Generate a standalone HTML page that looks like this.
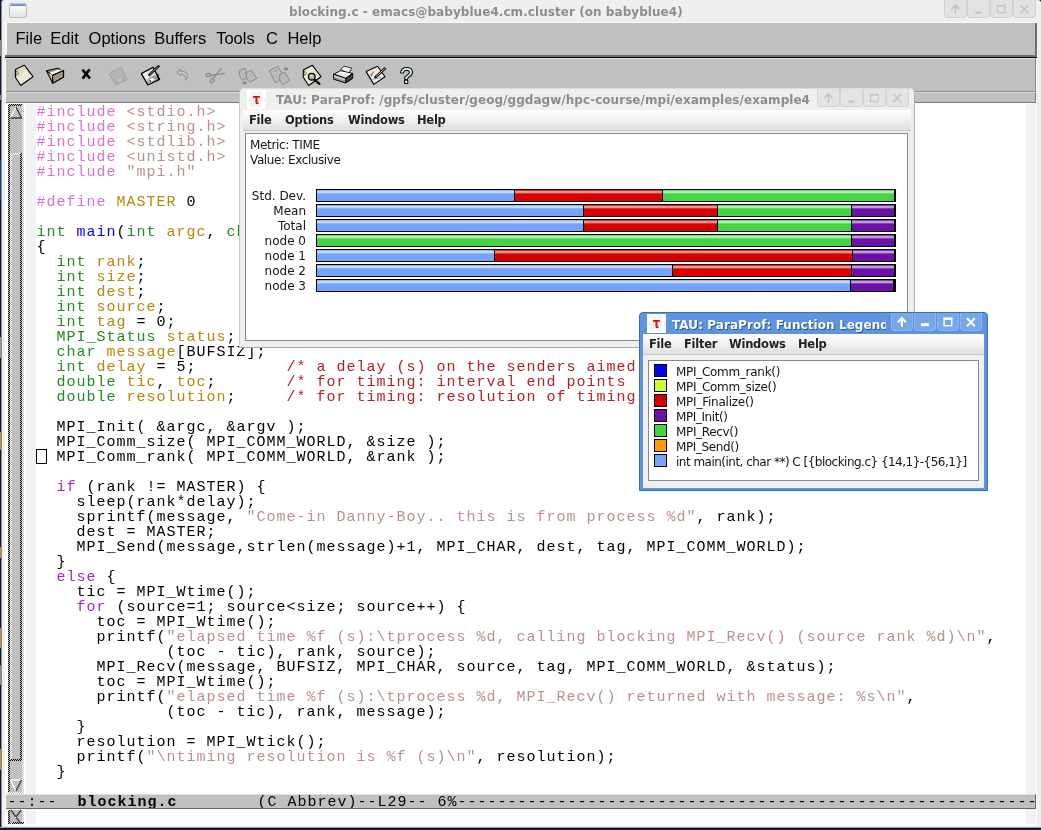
<!DOCTYPE html>
<html><head><meta charset="utf-8"><title>blocking.c - emacs</title>
<style>
*{box-sizing:border-box;margin:0;padding:0}
html,body{width:1041px;height:830px;overflow:hidden;background:#0d1830}
body{position:relative;font-family:"Liberation Sans",sans-serif}
.abs{position:absolute}
#root{position:absolute;left:0;top:0;width:1041px;height:830px;will-change:transform;transform:translateZ(0)}
#desk{left:0;top:0;width:1041px;height:830px;background:#101c38}
#dbot{left:0;top:827px;width:1041px;height:3px;background:linear-gradient(#9a9da6 0 1px,#0e1a34 1px 3px)}
#dleft{left:0;top:0;width:1px;height:830px;background:linear-gradient(#0b1428 0px 40px,#8a8a8a 40px 56px,#0d1a36 56px 95px,#8a8a8a 95px 100px,#0d1a36 100px 160px,#1c3f7a 160px 200px,#0d1a36 200px 337px,#9a9a98 337px 358px,#0d1a36 358px 432px,#d08a20 432px 450px,#0d1a36 450px 547px,#d08a20 547px 558px,#0d1a36 558px 628px,#d08a20 628px 648px,#0d1a36 648px 665px,#8a8a8a 665px 685px,#0d1a36 685px 749px,#d08a20 749px 770px,#0d1a36 770px 830px)}
#ewin{left:1px;top:0;width:1040px;height:827px;background:#efefee;border-left:1px solid #848a96;border-radius:3px 3px 0 0}
#xwin{left:5px;top:22px;width:1032px;height:804px;background:#fbfbfb}
#etitle{left:0;top:0;width:1041px;height:22px;font:bold 12px "DejaVu Sans",sans-serif;color:#8c8c8a}
#etitle span{position:absolute;left:289px;top:4.5px;white-space:pre;letter-spacing:.06px}
.wb{position:absolute;top:0;height:18px;width:23px;border:1px solid #d2d2d0;border-top:none;border-radius:0 0 4px 4px;background:#e2e2e0}
#emenu{left:7px;top:23px;width:1030px;height:35px;background:#c0c0c0;border-bottom:1px solid #000;border-right:2px solid #707070}
#emenu:after{content:"";position:absolute;left:0;right:0;bottom:0;height:2px;background:#707070}
#mline{left:5px;top:55px;width:1032px;height:3px;background:#000;border-top:2px solid #707070}
#emenu span{position:absolute;top:4.5px;font-size:16.5px;line-height:20px;color:#000;white-space:pre}
#etool{left:6px;top:58px;width:1030px;height:34px;background:#c0c0c0;border-top:1px solid #dcdcdc;border-bottom:1px solid #8a8a8a;border-right:1px solid #8a8a8a}
#egap{left:6px;top:92px;width:1030px;height:11px;background:#c0c0c0;border-top:1px solid #dadada;border-bottom:1px solid #7a7a7a;border-right:1px solid #7a7a7a}
#etext{left:5px;top:103px;width:1032px;height:723px;background:#fff}
.fringe{position:absolute;top:1px;width:10px;background:#f2f2f2}
pre.code{position:absolute;left:31.5px;top:2px;font:15px/15px "Liberation Mono",monospace;letter-spacing:.998px;color:#000;white-space:pre}
.b{color:#da70d6}.s{color:#bc8f8f}.v{color:#b8860b}.t{color:#228b22}.f{color:#0000ff}.k{color:#a020f0}.c{color:#b22222}
#cursor{position:absolute;left:31px;top:346px;width:11px;height:15px;border:1px solid #000}
#mode{left:6px;top:794px;width:1030px;height:15px;background:#c0c0c0;border-top:1px solid #dedede;border-bottom:1px solid #666;border-right:1px solid #666;overflow:hidden}
#mode pre{position:absolute;left:1.5px;top:-.5px;font:15px/15px "Liberation Mono",monospace;letter-spacing:.998px;color:#000;white-space:pre}

#pwin{left:239px;top:88px;width:676px;height:260px;background:#efefee;border:1px solid #c9c9c7;border-top-color:#dcdcda;border-bottom-color:#a8a8a6;border-right-color:#b0b0ae;border-radius:5px 5px 0 0}
.jt{position:absolute;font:bold 12px "DejaVu Sans",sans-serif;white-space:pre}
#pwin .ttl{left:36px;top:4px;color:#8c8c8a;line-height:15px;letter-spacing:.045px}
.jmenu{position:absolute;background:linear-gradient(#ffffff,#f4f4f4 40%,#dedede);border-bottom:1px solid #c8c8c8}
.jmenu span{position:absolute;top:3px;font:bold 11.5px/15px "DejaVu Sans",sans-serif;color:#222;letter-spacing:-0.25px}
.jpanel{position:absolute;background:#fff;border:1px solid #7a8a99}
.jl{position:absolute;font:12px/15px "DejaVu Sans",sans-serif;color:#141414;white-space:pre}
.bar{position:absolute;width:580px;height:13px;background:#000}
.seg{position:absolute;top:1px;height:11px}
.seg:after{content:"";position:absolute;left:0;right:0;top:0;height:4px;background:linear-gradient(rgba(255,255,255,.18) 0 1px,rgba(255,255,255,.58) 1px 3px,rgba(255,255,255,.2) 3px 4px)}
.cb{background:#74a3fb}.cr{background:#d80000}.cg{background:#44d544}.cp{background:#6a12a8}
.pwb{position:absolute;top:0;height:18px;width:23px;border:1px solid #d4d4d2;border-top:none;border-radius:0 0 4px 4px;background:#e4e4e2}

#lwin{left:639px;top:312px;width:349px;height:179px;background:#5e93df;border:1px solid #3c6db8;border-radius:4px 4px 0 0}
#lwin .ttl{left:32px;top:4.5px;color:#fff;line-height:15px;text-shadow:1px 1px 0 #2d5595;width:214px;overflow:hidden;letter-spacing:.07px}
#linner{left:3px;top:21px;width:341px;height:154px;background:#efefee}
.lb{position:absolute;top:0;height:18px;width:22px;border:1px solid #8db6ee;border-top:none;border-radius:0 0 4px 4px;background:#78a7e8}
.sw{position:absolute;left:5px;width:13px;height:13px;border:1px solid #000}

svg{position:absolute;overflow:visible}
.dith{background:repeating-conic-gradient(#000 0 25%,#c0c0c0 0 50%) 0 0/2px 2px}
.dithw{background:repeating-conic-gradient(#fff 0 25%,#c0c0c0 0 50%) 0 0/2px 2px}
</style></head><body>
<div id="root">
<div id="desk" class="abs"></div><div id="dleft" class="abs"></div>
<div id="ewin" class="abs"></div>
<div id="xwin" class="abs"></div>
<div id="dbot" class="abs"></div><div id="etitle" class="abs"><span>blocking.c - emacs@babyblue4.cm.cluster (on babyblue4)</span><svg width="18" height="15" viewBox="0 0 18 15" style="left:9px;top:3px"><defs><linearGradient id="wi" x1="0" y1="0" x2="0" y2="1"><stop offset="0" stop-color="#fff"/><stop offset="1" stop-color="#e2e4e0"/></linearGradient></defs><rect x=".5" y=".5" width="17" height="14" rx="1.5" fill="url(#wi)" stroke="#bdbdbb"/><rect x="1.5" y="1.3" width="15" height="1.6" fill="#4e7dc0"/></svg><div class="wb" style="left:944px"><svg width="23" height="18" viewBox="0 0 23 18" style="left:-1px;top:0"><path d="M11.4 13.8 V5.8 M7.5 9.3 L11.4 5.1 L15.3 9.3" fill="none" stroke="#c4c4c2" stroke-width="1.6800000000000002"/></svg></div><div class="wb" style="left:967px"><svg width="23" height="18" viewBox="0 0 23 18" style="left:-1px;top:0"><rect x="8.4" y="11.4" width="6.2" height="2.3" fill="#c4c4c2"/></svg></div><div class="wb" style="left:990px"><svg width="23" height="18" viewBox="0 0 23 18" style="left:-1px;top:0"><rect x="7.6000000000000005" y="5.5" width="7.6" height="7.2" fill="none" stroke="#c4c4c2" stroke-width="1.1199999999999999"/><path d="M6.9 5.7 H15.9" stroke="#c4c4c2" stroke-width="1.7600000000000002"/></svg></div><div class="wb" style="left:1013px"><svg width="23" height="18" viewBox="0 0 23 18" style="left:-1px;top:0"><path d="M7.5 5.2 L15.3 13.2 M15.3 5.2 L7.5 13.2" stroke="#c4c4c2" stroke-width="1.6"/></svg></div></div>
<div id="emenu" class="abs"><span style="left:8.5px">File</span><span style="left:43.3px">Edit</span><span style="left:81.6px">Options</span><span style="left:147.3px">Buffers</span><span style="left:209.2px">Tools</span><span style="left:259px">C</span><span style="left:280.4px">Help</span></div>
<div id="mline" class="abs"></div><div id="etool" class="abs"><svg width="1030" height="34" viewBox="6 59 1030 34" style="left:0;top:0"><polygon points="15.4,69.6 24.4,65.3 33,76.7 20.7,85.5 15.4,77.2" fill="#ebebd3" stroke="#000" stroke-width="1.1" stroke-linejoin="round"/><polygon points="16.2,70.2 24.2,66.2 26.4,69 17.6,78.6 16.2,76.8" fill="#dadabd"/><polygon points="16.2,70.6 18.8,73.2 16.2,75.2" fill="#f6f6e6" stroke="#000" stroke-width=".5"/><polygon points="46.4,70.8 57.8,68.2 60.4,69.5 52.4,75.3" fill="#a09078" stroke="#000" stroke-width="1"/><polygon points="46.4,70.8 52.4,75.3 52.6,83.2" fill="#a09078" stroke="#000" stroke-width="1" stroke-linejoin="round"/><polygon points="49.6,72.8 58.8,69.6 61,70.8 52.6,75" fill="#fff"/><polygon points="49.4,73.2 52.2,75.4 52.3,79.2" fill="#fff"/><polygon points="52.5,75.4 63.5,70.5 63.5,77.3 52.7,83.2" fill="#a29882" stroke="#000" stroke-width="1.3" stroke-linejoin="round"/><path d="M82.4 69.6 L90 78.4 M89.6 69.4 L82.6 78.6" stroke="#000" stroke-width="2.6" stroke-linecap="butt" fill="none"/><g stroke="#a2a2a2" stroke-width="1" stroke-linejoin="round"><polygon points="109.3,73.6 121.3,67.3 127.6,79.4 115.8,84.8" fill="#b4b4b4"/><polygon points="115.4,79.6 123.6,75.6 125.6,79.2 117.4,83.4" fill="#c2c2c2" stroke-width=".6"/></g><path d="M117.6 80.6 L118.4 82 M122.4 76.6 a1.2 1.6 -25 1 0 .1 0" fill="none" stroke="#9a9a9a" stroke-width=".8"/><polygon points="141.3,73.6 153,67.3 159.6,79.4 147.8,84.8" fill="#d4d4d4" stroke="#000" stroke-width="1.3" stroke-linejoin="round"/><polygon points="142.6,74 147,71.6 149.4,76 147.6,82" fill="#ececec"/><polygon points="147.6,79.8 155.6,75.8 157.4,79.2 149.2,83.4" fill="#f4f4f4" stroke="#555" stroke-width=".7"/><polygon points="156.6,74.6 158.2,73.8 159.6,79.4 158,80.2" fill="#000"/><path d="M149.8 80.2 L150.6 81.8" stroke="#000" stroke-width="1.2"/><ellipse cx="154.6" cy="77.6" rx="1.1" ry="1.5" transform="rotate(-25 154.6 77.6)" fill="#bbb" stroke="#666" stroke-width=".6"/><path d="M148.6 75.6 L159.2 65.6" stroke="#000" stroke-width="2.3"/><path d="M149.6 74.7 L158.6 66.2" stroke="#a8a8a8" stroke-width=".8"/><path d="M177 72.4 L180.5 69.3 L180.6 71.2 C184.6 70.8 187.8 73.4 187.7 76.6 C187.5 78.2 186.5 79.3 185.4 79.7 C186.3 77.4 185.2 74.4 180.6 74.2 L180.5 75.6 Z" fill="#c6c6c6" stroke="#868686" stroke-width="1" stroke-linejoin="round"/><g fill="none" stroke="#868686" stroke-width="1.1"><path d="M221.4 68.2 L212.8 79 M224.8 73.4 L210.4 75.4"/><ellipse cx="208.3" cy="74.9" rx="2.3" ry="1.6"/><ellipse cx="212.2" cy="80.8" rx="1.5" ry="2.6" transform="rotate(35 212.2 80.8)"/></g><g fill="#b9b9b9" stroke="#8a8a8a" stroke-width="1" stroke-linejoin="round"><polygon points="239.3,70.5 244.4,68.2 245.9,70.2 246.4,77.9 242.4,80.4 239.3,75"/><polygon points="246.4,72.7 251.3,70.2 256.8,78.4 249.3,82.4 246.4,77.9"/></g><path d="M242 83 H244.4 V81.5 L246.6 83 L244.4 84.5 V83" fill="#808080" stroke="#808080" stroke-width=".9" stroke-linejoin="round"/><g fill="#b9b9b9" stroke="#8a8a8a" stroke-width="1" stroke-linejoin="round"><polygon points="269.3,70.8 277.8,66.2 281.6,72.6 279.6,80.6 275.4,82.6"/><polygon points="279.8,74.4 284.6,72.2 289.8,80.4 282.4,84.6 279.6,79.4"/></g><path d="M274.2 71.2 L276.6 69.8 L275.8 71.6 Z" fill="none" stroke="#9a9a9a" stroke-width=".7"/><path d="M283.3 68.9 H285.7 V67.4 L287.9 68.9 L285.7 70.4 V68.9" fill="#808080" stroke="#808080" stroke-width=".9" stroke-linejoin="round"/><polygon points="303.3,70 312.4,65.3 321,76.7 308.7,85.5 303.3,77.2" fill="#ebebd3" stroke="#000" stroke-width="1.1" stroke-linejoin="round"/><polygon points="304.2,70.8 306.8,73.4 304.2,75.4" fill="#f6f6e6" stroke="#000" stroke-width=".5"/><circle cx="311.8" cy="76.7" r="3.3" fill="#b8bca6" stroke="#000" stroke-width="1.3"/><circle cx="310.8" cy="75.8" r="1.1" fill="#d8dccc"/><path d="M314.6 79.8 L319.4 83.8" stroke="#000" stroke-width="2.3" stroke-linecap="round"/><polygon points="340.6,69.6 344.1,66.1 351.9,68.2 348.7,73.4" fill="#f2f2f2" stroke="#000" stroke-width=".8" stroke-linejoin="round"/><polygon points="333.5,74.2 340.4,70.8 352.7,73.4 345.8,78.4" fill="#e6e6e6" stroke="#000" stroke-width=".9" stroke-linejoin="round"/><polygon points="339.4,72.8 342,71.4 350.4,73.4 347.6,75.2" fill="#fafafa"/><polygon points="333.5,74.2 345.8,78.4 345.8,83 333.7,79.2" fill="#9c9c9c" stroke="#000" stroke-width="1" stroke-linejoin="round"/><polygon points="334.2,75.2 345.4,79 345.4,80.4 334.2,76.8" fill="#d4d4d4"/><polygon points="345.8,78.4 352.7,73.4 352.7,78.4 345.8,83" fill="#404040" stroke="#000" stroke-width="1" stroke-linejoin="round"/><polygon points="366.1,71.6 377.6,66.2 385,76.7 373.8,84.4" fill="#ececec" stroke="#000" stroke-width="1.1" stroke-linejoin="round"/><path d="M370.4 73.4 L371.6 75.6 L373.6 71.6" stroke="#b86840" stroke-width="1.1" fill="none"/><path d="M372.4 79.4 L381 77.4" stroke="#999" stroke-width="1"/><path d="M374.8 77.8 L385.6 67.8" stroke="#000" stroke-width="2.5"/><path d="M375.8 76.9 L385.2 68.2" stroke="#e8b070" stroke-width="1"/><text x="406.6" y="82.7" text-anchor="middle" font-family="Liberation Sans, sans-serif" font-size="22.5" fill="#e4f6e4" stroke="#000" stroke-width="2.2" stroke-linejoin="round" paint-order="stroke">?</text></svg></div>
<div id="egap" class="abs"></div>
<div id="etext" class="abs">
<div class="fringe" style="left:21px;height:690px"></div><div class="fringe" style="left:1021px;height:690px"></div><div class="fringe" style="left:21px;top:706px;height:15px"></div><div class="fringe" style="left:1021px;top:706px;height:15px"></div>
<div class="abs" style="left:3px;top:1px;width:16px;height:690px;background:#c0c0c0"></div><div class="abs dith" style="left:3px;top:1px;width:2px;height:690px"></div><div class="abs dith" style="left:3px;top:1px;width:16px;height:2px"></div><div class="abs dithw" style="left:17px;top:1px;width:2px;height:690px"></div><div class="abs dithw" style="left:3px;top:689px;width:16px;height:2px"></div><div class="abs dithw" style="left:5px;top:50px;width:2px;height:607px"></div><div class="abs dithw" style="left:5px;top:50px;width:12px;height:2px"></div><div class="abs dith" style="left:15px;top:50px;width:2px;height:607px"></div><div class="abs dith" style="left:5px;top:656px;width:12px;height:2px"></div><svg width="16" height="690" viewBox="8 104 16 690" style="left:3px;top:1px"><path d="M16 107 L10.5 118" stroke="#fff" stroke-width="1.4"/><path d="M16 107 L21.5 118 H10.5" fill="none" stroke="#404040" stroke-width="1.4"/><path d="M10.5 780 H21.5" stroke="#fff" stroke-width="1.4"/><path d="M10.5 780 L16 791" stroke="#fff" stroke-width="1.4"/><path d="M21.5 780 L16 791" stroke="#404040" stroke-width="1.4"/></svg><div class="abs" style="left:3px;top:707px;width:16px;height:14px;background:#c0c0c0"></div><div class="abs dith" style="left:3px;top:707px;width:2px;height:14px"></div><div class="abs dithw" style="left:17px;top:707px;width:2px;height:14px"></div><div class="abs dith" style="left:3px;top:719px;width:16px;height:2px"></div><svg width="16" height="14" viewBox="8 810 16 14" style="left:3px;top:707px"><path d="M11 810 L21 824 M21 810 L11 824" stroke="#404040" stroke-width="1.3"/><path d="M11 824 L16 817" stroke="#fff" stroke-width="1.2"/></svg>
<pre class="code"><span class="b">#include</span> <span class="s">&lt;stdio.h&gt;</span>
<span class="b">#include</span> <span class="s">&lt;string.h&gt;</span>
<span class="b">#include</span> <span class="s">&lt;stdlib.h&gt;</span>
<span class="b">#include</span> <span class="s">&lt;unistd.h&gt;</span>
<span class="b">#include</span> <span class="s">"mpi.h"</span>

<span class="b">#define</span> <span class="v">MASTER</span> 0

<span class="t">int</span> <span class="f">main</span>(<span class="t">int</span> <span class="v">argc</span>, <span class="t">char</span> *<span class="v">argv</span>[])
{
  <span class="t">int</span> <span class="v">rank</span>;
  <span class="t">int</span> <span class="v">size</span>;
  <span class="t">int</span> <span class="v">dest</span>;
  <span class="t">int</span> <span class="v">source</span>;
  <span class="t">int</span> <span class="v">tag</span> = 0;
  <span class="t">MPI_Status</span> <span class="v">status</span>;
  <span class="t">char</span> <span class="v">message</span>[BUFSIZ];
  <span class="t">int</span> <span class="v">delay</span> = 5;         <span class="c">/* a delay (s) on the senders aimed at showing blocking */</span>
  <span class="t">double</span> <span class="v">tic</span>, <span class="v">toc</span>;       <span class="c">/* for timing: interval end points          */</span>
  <span class="t">double</span> <span class="v">resolution</span>;     <span class="c">/* for timing: resolution of timing calls */</span>

  MPI_Init( &amp;argc, &amp;argv );
  MPI_Comm_size( MPI_COMM_WORLD, &amp;size );
  MPI_Comm_rank( MPI_COMM_WORLD, &amp;rank );

  <span class="k">if</span> (rank != MASTER) {
    sleep(rank*delay);
    sprintf(message, <span class="s">"Come-in Danny-Boy.. this is from process %d"</span>, rank);
    dest = MASTER;
    MPI_Send(message,strlen(message)+1, MPI_CHAR, dest, tag, MPI_COMM_WORLD);
  }
  <span class="k">else</span> {
    tic = MPI_Wtime();
    <span class="k">for</span> (source=1; source&lt;size; source++) {
      toc = MPI_Wtime();
      printf(<span class="s">"elapsed time %f (s):\tprocess %d, calling blocking MPI_Recv() (source rank %d)\n"</span>,
             (toc - tic), rank, source);
      MPI_Recv(message, BUFSIZ, MPI_CHAR, source, tag, MPI_COMM_WORLD, &amp;status);
      toc = MPI_Wtime();
      printf(<span class="s">"elapsed time %f (s):\tprocess %d, MPI_Recv() returned with message: %s\n"</span>,
             (toc - tic), rank, message);
    }
    resolution = MPI_Wtick();
    printf(<span class="s">"\ntiming resolution is %f (s)\n"</span>, resolution);
  }</pre><div id="cursor"></div>
</div>
<div id="mode" class="abs"><pre>--:--  <b>blocking.c</b>        (C Abbrev)--L29-- 6%--------------------------------------------------------------------------------</pre></div>
<div id="pwin" class="abs"><svg width="19" height="19" viewBox="0 0 19 19" style="left:7px;top:1px"><rect width="19" height="19" fill="#fff"/><ellipse cx="9.5" cy="9.6" rx="8.8" ry="2.6" transform="rotate(0 9.5 9.6)" fill="#f6f6f6" stroke="#e6e6e6" stroke-width=".7"/><ellipse cx="9.5" cy="9.6" rx="8.8" ry="2.6" transform="rotate(60 9.5 9.6)" fill="#f6f6f6" stroke="#e6e6e6" stroke-width=".7"/><ellipse cx="9.5" cy="9.6" rx="8.8" ry="2.6" transform="rotate(120 9.5 9.6)" fill="#f6f6f6" stroke="#e6e6e6" stroke-width=".7"/><text transform="translate(9.4 14.1) scale(.84 1.06)" text-anchor="middle" font-family="DejaVu Sans, sans-serif" font-weight="bold" font-size="14" fill="#c4161c">τ</text></svg><span class="jt ttl">TAU: ParaProf: /gpfs/cluster/geog/ggdagw/hpc-course/mpi/examples/example4</span><div class="pwb" style="left:577px"><svg width="23" height="19" viewBox="0 0 23 19" style="left:-1px;top:0"><path d="M11.4 13.8 V5.8 M7.5 9.3 L11.4 5.1 L15.3 9.3" fill="none" stroke="#c4c4c2" stroke-width="1.6800000000000002"/></svg></div><div class="pwb" style="left:600px"><svg width="23" height="19" viewBox="0 0 23 19" style="left:-1px;top:0"><rect x="8.4" y="11.4" width="6.2" height="2.3" fill="#c4c4c2"/></svg></div><div class="pwb" style="left:623px"><svg width="23" height="19" viewBox="0 0 23 19" style="left:-1px;top:0"><rect x="7.6000000000000005" y="5.5" width="7.6" height="7.2" fill="none" stroke="#c4c4c2" stroke-width="1.1199999999999999"/><path d="M6.9 5.7 H15.9" stroke="#c4c4c2" stroke-width="1.7600000000000002"/></svg></div><div class="pwb" style="left:646px"><svg width="23" height="19" viewBox="0 0 23 19" style="left:-1px;top:0"><path d="M7.5 5.2 L15.3 13.2 M15.3 5.2 L7.5 13.2" stroke="#c4c4c2" stroke-width="1.6"/></svg></div><div class="jmenu" style="left:3px;top:21px;width:668px;height:21px"><span style="left:6px">File</span><span style="left:42px">Options</span><span style="left:105px">Windows</span><span style="left:174px">Help</span></div><div class="jpanel" style="left:5px;top:44px;width:663px;height:208px"><span class="jl" style="left:4px;top:4px;letter-spacing:-0.35px">Metric: TIME</span><span class="jl" style="left:4px;top:19px;letter-spacing:-0.4px">Value: Exclusive</span><span class="jl" style="right:601px;top:55px">Std. Dev.</span><div class="bar" style="left:70px;top:55px"><div class="seg cb" style="left:1px;width:197px"></div><div class="seg cr" style="left:199px;width:147px"></div><div class="seg cg" style="left:347px;width:231px"></div></div><span class="jl" style="right:601px;top:70px">Mean</span><div class="bar" style="left:70px;top:70px"><div class="seg cb" style="left:1px;width:266px"></div><div class="seg cr" style="left:268px;width:133px"></div><div class="seg cg" style="left:402px;width:133px"></div><div class="seg cp" style="left:536px;width:42px"></div></div><span class="jl" style="right:601px;top:85px">Total</span><div class="bar" style="left:70px;top:85px"><div class="seg cb" style="left:1px;width:266px"></div><div class="seg cr" style="left:268px;width:133px"></div><div class="seg cg" style="left:402px;width:133px"></div><div class="seg cp" style="left:536px;width:42px"></div></div><span class="jl" style="right:601px;top:100px">node 0</span><div class="bar" style="left:70px;top:100px"><div class="seg cg" style="left:1px;width:534px"></div><div class="seg cp" style="left:536px;width:42px"></div></div><span class="jl" style="right:601px;top:115px">node 1</span><div class="bar" style="left:70px;top:115px"><div class="seg cb" style="left:1px;width:177px"></div><div class="seg cr" style="left:179px;width:357px"></div><div class="seg cp" style="left:537px;width:41px"></div></div><span class="jl" style="right:601px;top:130px">node 2</span><div class="bar" style="left:70px;top:130px"><div class="seg cb" style="left:1px;width:355px"></div><div class="seg cr" style="left:357px;width:178px"></div><div class="seg cp" style="left:536px;width:42px"></div></div><span class="jl" style="right:601px;top:145px">node 3</span><div class="bar" style="left:70px;top:145px"><div class="seg cb" style="left:1px;width:533px"></div><div class="seg cp" style="left:535px;width:42px"></div></div></div></div>
<div id="lwin" class="abs"><svg width="19" height="19" viewBox="0 0 19 19" style="left:7px;top:1px"><rect width="19" height="19" fill="#fff"/><ellipse cx="9.5" cy="9.6" rx="8.8" ry="2.6" transform="rotate(0 9.5 9.6)" fill="#f6f6f6" stroke="#e6e6e6" stroke-width=".7"/><ellipse cx="9.5" cy="9.6" rx="8.8" ry="2.6" transform="rotate(60 9.5 9.6)" fill="#f6f6f6" stroke="#e6e6e6" stroke-width=".7"/><ellipse cx="9.5" cy="9.6" rx="8.8" ry="2.6" transform="rotate(120 9.5 9.6)" fill="#f6f6f6" stroke="#e6e6e6" stroke-width=".7"/><text transform="translate(9.4 14.1) scale(.84 1.06)" text-anchor="middle" font-family="DejaVu Sans, sans-serif" font-weight="bold" font-size="14" fill="#c4161c">τ</text></svg><span class="jt ttl">TAU: ParaProf: Function Legend</span><div class="lb" style="left:251px"><svg width="22" height="19" viewBox="0 0 22 19" style="left:-1px;top:0"><path d="M10.9 13.8 V5.8 M7.0 9.3 L10.9 5.1 L14.8 9.3" fill="none" stroke="#fff" stroke-width="2.1"/></svg></div><div class="lb" style="left:274px"><svg width="22" height="19" viewBox="0 0 22 19" style="left:-1px;top:0"><rect x="7.1000000000000005" y="10.2" width="7.8" height="3" fill="#fff"/></svg></div><div class="lb" style="left:297px"><svg width="22" height="19" viewBox="0 0 22 19" style="left:-1px;top:0"><rect x="7.1000000000000005" y="5.5" width="7.6" height="7.2" fill="none" stroke="#fff" stroke-width="1.4"/><path d="M6.4 5.7 H15.4" stroke="#fff" stroke-width="2.2"/></svg></div><div class="lb" style="left:320px"><svg width="22" height="19" viewBox="0 0 22 19" style="left:-1px;top:0"><path d="M7.0 5.2 L14.8 13.2 M14.8 5.2 L7.0 13.2" stroke="#fff" stroke-width="2.0"/></svg></div><div id="linner" class="abs"><div class="jmenu" style="left:0;top:0;width:341px;height:21px"><span style="left:6px">File</span><span style="left:41px">Filter</span><span style="left:86px">Windows</span><span style="left:155px">Help</span></div><div class="jpanel" style="left:5px;top:26px;width:331px;height:121px"><div class="sw" style="top:3px;background:#0000ff"></div><span class="jl" style="left:27px;top:4px;letter-spacing:-0.29px">MPI_Comm_rank()</span><div class="sw" style="top:18px;background:#c8ff32"></div><span class="jl" style="left:27px;top:19px;letter-spacing:-0.3px">MPI_Comm_size()</span><div class="sw" style="top:33px;background:#d80000"></div><span class="jl" style="left:27px;top:34px;letter-spacing:-0.24px">MPI_Finalize()</span><div class="sw" style="top:48px;background:#6a12a8"></div><span class="jl" style="left:27px;top:49px;letter-spacing:-0.41px">MPI_Init()</span><div class="sw" style="top:63px;background:#44d544"></div><span class="jl" style="left:27px;top:64px;letter-spacing:-0.34px">MPI_Recv()</span><div class="sw" style="top:78px;background:#ff9900"></div><span class="jl" style="left:27px;top:79px;letter-spacing:-0.4px">MPI_Send()</span><div class="sw" style="top:93px;background:#74a3fb"></div><span class="jl" style="left:27px;top:94px;letter-spacing:-0.515px">int main(int, char **) C [{blocking.c} {14,1}-{56,1}]</span></div></div></div>
</div>
</body></html>
